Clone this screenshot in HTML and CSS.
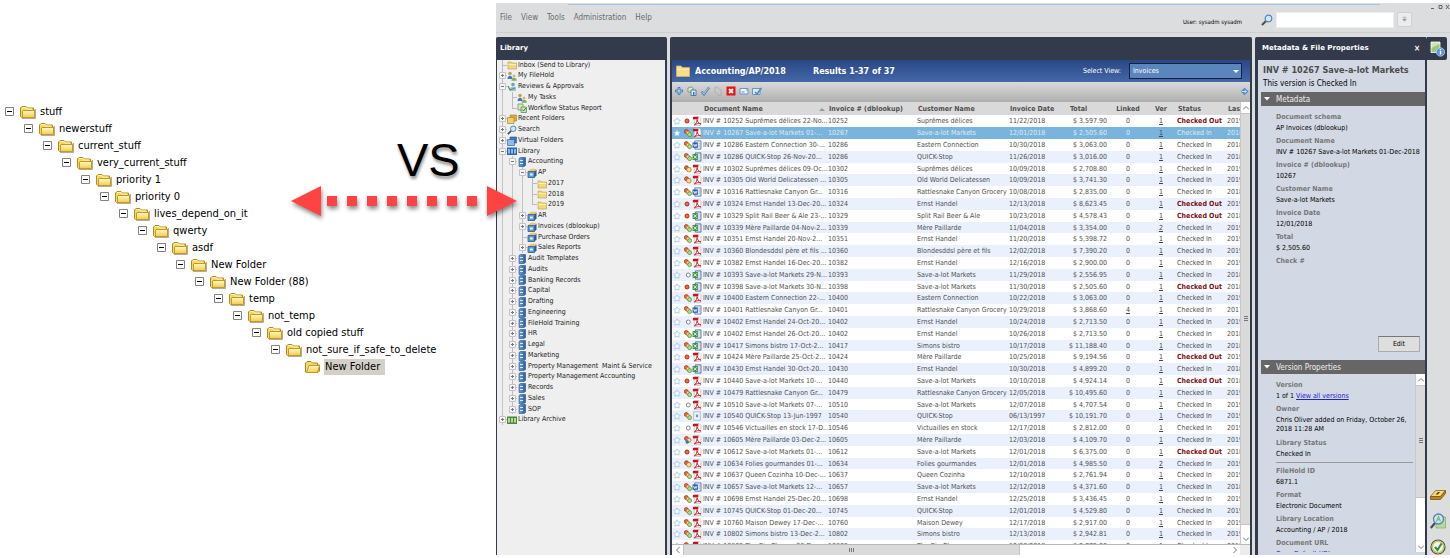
FILE: index.html
```html
<!DOCTYPE html>
<html lang="en">
<head>
<meta charset="utf-8">
<title>Folders vs Document Library</title>
<link rel="stylesheet" href="styles.css">
</head>
<body>

<svg class="defs" aria-hidden="true">
	<defs>
		<linearGradient id="gold" x1="0" y1="0" x2="0" y2="1">
			<stop offset="0" stop-color="#fffbc0"/>
			<stop offset="1" stop-color="#f3cb4e"/>
		</linearGradient>
		<linearGradient id="bluebox" x1="0" y1="0" x2="1" y2="0">
			<stop offset="0" stop-color="#6fa3dc"/>
			<stop offset="1" stop-color="#2c5b9c"/>
		</linearGradient>
	</defs>
	<!-- explorer tree -->
	<symbol id="xp-folder" viewBox="0 0 16 14">
		<path d="M2 13.5H15.5V4" fill="none" stroke="#8f8a78" opacity=".7"/>
		<path d="M.5 11.5V3L2 1.5H6L7.5 3H13.5V5H14.5V12.5H1.5Z" fill="#f5d868" stroke="#b58a1c"/>
		<path d="M3 5.5H14.5V12.5H2.5V6Z" fill="url(#gold)" stroke="#c4992a"/>
		<path d="M2 2.5H6L7 4H12" fill="none" stroke="#fff6b4"/>
	</symbol>
	<symbol id="xp-open" viewBox="0 0 16 14">
		<path d="M.5 12V3L2 1.5H6L7.5 3H12.5V5H14.5V11L13 12.5H1.5Z" fill="#f5d868" stroke="#b58a1c"/>
		<path d="M4 5.5H14.5L12.5 12.5H1.5Z" fill="url(#gold)" stroke="#c4992a"/>
	</symbol>
	<!-- library tree -->
	<symbol id="folder" viewBox="0 0 10 10">
		<path d="M1 2H4L5 3H9.500V9H1Z" fill="#f3d77c" stroke="#b99a45" stroke-width=".6"/>
		<path d="M1.500 4H9V5H1.500Z" fill="#fff0b4"/>
	</symbol>
	<symbol id="people" viewBox="0 0 10 10">
		<circle cx="3" cy="2.500" r="1.800" fill="#c99b58"/>
		<path d="M.5 8C.5 3.500 5.500 3.500 5.500 8Z" fill="#3e78c0"/>
		<circle cx="7" cy="5" r="1.500" fill="#d8b478"/>
		<path d="M4.500 9.800C4.500 5.800 9.800 5.800 9.800 9.800Z" fill="#7eb34c"/>
	</symbol>
	<symbol id="review" viewBox="0 0 10 10">
		<circle cx="6" cy="2.500" r="1.800" fill="#70a0cf"/>
		<path d="M3 9C2 5 6 3.500 9 5V9Z" fill="#9bc2e2"/>
		<path d="M1 4L3 8L8 6" fill="none" stroke="#5b9a45" stroke-width="1.300"/>
	</symbol>
	<symbol id="report" viewBox="0 0 10 10">
		<path d="M1 1H6V7H1Z" fill="#dfeacd" stroke="#6a9b54" stroke-width=".8"/>
		<path d="M4 4H9.500V9.500H4Z" fill="#cde4c2" stroke="#58905a" stroke-width=".8"/>
		<path d="M5 6.500L6.500 8L9 5" fill="none" stroke="#307a3a"/>
	</symbol>
	<symbol id="stack" viewBox="0 0 10 10">
		<path d="M3 1H9.500V7H3Z" fill="#d9ac45" stroke="#a37b27" stroke-width=".6"/>
		<path d="M.5 3.500H7V9.500H.5Z" fill="#f0ce72" stroke="#a37b27" stroke-width=".6"/>
	</symbol>
	<symbol id="bluestack" viewBox="0 0 10 10">
		<path d="M3 1H9.500V7H3Z" fill="#3e76bb" stroke="#28588f" stroke-width=".6"/>
		<path d="M.5 3.500H7.500V9.500H.5Z" fill="#8fbce6" stroke="#28588f" stroke-width=".6"/>
	</symbol>
	<symbol id="lens" viewBox="0 0 12 12">
		<path d="M1 11L5 7" stroke="#4b4b58" stroke-width="2"/>
		<circle cx="7.500" cy="4.500" r="3.300" fill="#cfe6fa" stroke="#4f87c0" stroke-width="1.200"/>
	</symbol>
	<symbol id="books" viewBox="0 0 10 10">
		<path d="M0 1.500H10V9H0Z" fill="#2f66ad"/>
		<path d="M1 3H3V7.500H1ZM4 3H6V7.500H4ZM7 3H9V7.500H7Z" fill="#8eb7e6"/>
	</symbol>
	<symbol id="archive" viewBox="0 0 10 10">
		<path d="M0 1.500H10V9H0Z" fill="#4f8638"/>
		<path d="M1 3H3V7.500H1ZM4 3H6V7.500H4ZM7 3H9V7.500H7Z" fill="#b7d7a0"/>
	</symbol>
	<symbol id="cabinet" viewBox="0 0 10 10">
		<path d="M2 1.500L3.500 .5H8.500V8.500L7 9.500H2Z" fill="url(#bluebox)" stroke="#25508c" stroke-width=".6"/>
		<path d="M3 3H6V4H3ZM3 6H6V7H3Z" fill="#d8e8f8"/>
	</symbol>
	<symbol id="drawer" viewBox="0 0 10 10">
		<path d="M1 3L4 .8H9.500L8 3Z" fill="#efc75a"/>
		<path d="M1 3.500H7.500V9.500H1Z" fill="#5e99d4" stroke="#285a96" stroke-width=".8"/>
		<path d="M7.500 3.500L9.500 1.500V7.500L7.500 9.500Z" fill="#2a5c9c"/>
		<path d="M3 5.500H5.800V7.500H3Z" fill="#e7f2fc"/>
	</symbol>
	<!-- grid rows -->
	<symbol id="star" viewBox="0 0 8 8">
		<path d="M4 .8L5 2.800L7.300 3.200L5.800 4.800L6.100 7.200L4 6.200L1.900 7.200L2.200 4.800L.7 3.200L3 2.800Z" fill="#fff" stroke="#8fbce0" stroke-width=".7"/>
	</symbol>
	<symbol id="st-r" viewBox="0 0 8 8">
		<circle cx="3" cy="4" r="2" fill="#f0703a" stroke="#b5281c"/>
	</symbol>
	<symbol id="st-m" viewBox="0 0 8 8">
		<circle cx="2.300" cy="2.500" r="2" fill="#ea6a3c" stroke="#a02a1c" stroke-width=".7"/>
		<circle cx="4" cy="4" r="1.900" fill="#f8dc7c" stroke="#a5622a" stroke-width=".6"/>
		<circle cx="5.600" cy="5.600" r="2" fill="#b4dc8c" stroke="#4b8430" stroke-width=".7"/>
	</symbol>
	<symbol id="st-y" viewBox="0 0 8 8">
		<circle cx="2.500" cy="2.800" r="2" fill="#ea6a3c" stroke="#a02a1c" stroke-width=".8"/>
		<circle cx="4.900" cy="4.700" r="2.300" fill="#fbe48c" stroke="#a2742a" stroke-width=".8"/>
	</symbol>
	<symbol id="st-b" viewBox="0 0 8 8">
		<circle cx="2.500" cy="2.600" r="2" fill="#ea6a3c" stroke="#a02a1c" stroke-width=".8"/>
		<circle cx="5" cy="4.200" r="2.100" fill="#fbe48c" stroke="#a2742a" stroke-width=".8"/>
		<circle cx="3.200" cy="6" r="1.700" fill="#3f6fb0"/>
	</symbol>
	<symbol id="st-o" viewBox="0 0 8 8">
		<circle cx="4.300" cy="4" r="2" fill="#fff" stroke="#777" stroke-width=".9"/>
	</symbol>
	<symbol id="ft-p" viewBox="0 0 8 9">
		<path d="M1.500 .5H6L7.500 2V8.500H1.500Z" fill="#fff" stroke="#bbb" stroke-width=".6"/>
		<path d="M.3 .8H5.200V3H.3Z" fill="#c8141c"/>
		<path d="M1.600 8C3.500 6.500 4.200 4.800 4 3.200C4.400 5.200 5.600 6.600 7.600 7.200C5.600 6.600 3.600 6.800 1.600 8Z" fill="none" stroke="#cf2229" stroke-width=".9"/>
	</symbol>
	<symbol id="ft-w" viewBox="0 0 8 9">
		<path d="M2 .8H7.600V8.200H2Z" fill="#e9f1fb" stroke="#3d69ab" stroke-width=".7"/>
		<path d="M5.500 3H7M5.500 4.500H7M5.500 6H7" stroke="#7d9cc8" stroke-width=".6"/>
		<path d="M0 2.200H4.800V7H0Z" fill="#2b58a2"/>
		<path d="M.8 3.400L1.700 5.900L2.400 4L3.100 5.900L4 3.400" fill="none" stroke="#fff" stroke-width=".7"/>
	</symbol>
	<symbol id="ft-x" viewBox="0 0 8 9">
		<path d="M2.500 .8H7.600V8.200H2.500Z" fill="#d3e2f2" stroke="#3e5f8c" stroke-width=".7"/>
		<path d="M0 1.800H4.800V7.200H0Z" fill="#3f9345"/>
		<path d="M1 3L3.800 6M3.800 3L1 6" stroke="#fff" stroke-width=".8"/>
	</symbol>
	<symbol id="ft-t" viewBox="0 0 8 9">
		<path d="M1 .7H7V8.300H1Z" fill="#eef4fa" stroke="#9ab0c6" stroke-width=".7"/>
		<path d="M3 3.200H5V5.600H3Z" fill="#6d93b8"/>
	</symbol>
</svg>

<main class="page">

	<section class="explorer">
		<ul class="xp-tree" id="xpTree"></ul>
	</section>

	<div class="versus">
		<span class="versus-text">VS</span>
		<svg class="versus-arrow" viewBox="0 0 226 30">
			<path d="M0 15L30 0V30ZM226 15L196 0V30Z"/>
			<path d="M36 10h10v10h-10zM56 10h10v10h-10zM76 10h10v10h-10zM96 10h10v10h-10zM116 10h10v10h-10zM136 10h10v10h-10zM156 10h10v10h-10zM176 10h10v10h-10z"/>
		</svg>
	</div>

	<section class="app">
		<header class="topbar">
			<nav class="menu">
				<a href="#">File</a>
				<a href="#">View</a>
				<a href="#">Tools</a>
				<a href="#">Administration</a>
				<a href="#">Help</a>
			</nav>
			<span class="user">User: sysadm sysadm</span>
			<form class="search">
				<label for="q" title="Search"><svg class="ico-12"><use href="#lens"/></svg></label>
				<input type="text" id="q">
				<button type="button" class="search-more" aria-label="Search options">
					<svg viewBox="0 0 8 8"><path d="M2 1.500H6M2 3.500H6L4 6Z" stroke="#999" stroke-width=".8" fill="#999"/></svg>
				</button>
			</form>
			<svg class="window-buttons" viewBox="0 0 20 6"><path d="M1 4.500H4M9 1.500H12V4.500H9ZM16 1L19 5M19 1L16 5" fill="none" stroke="#666"/></svg>
		</header>

		<div class="panels">
			<aside class="panel library">
				<h2 class="panel-head">Library</h2>
				<ul class="lib-tree" id="libTree"></ul>
			</aside>

			<section class="panel results">
				<div class="panel-head"></div>
				<div class="title-bar">
					<svg class="ico-title" viewBox="0 0 14 12"><path d="M.5 1H5L6.500 2.500H13.500V11.500H.5Z" fill="#f8dd8a" stroke="#e0b850" stroke-width=".7"/><path d="M1 4H13V5H1Z" fill="#fff1bd"/></svg>
					<h1>Accounting/AP/2018</h1>
					<strong>Results 1-37 of 37</strong>
					<label for="view">Select View:</label>
					<span class="select-wrap">
						<select id="view"><option>Invoices</option></select>
						<svg viewBox="0 0 8 5"><path d="M1 1H7L4 4Z" fill="#fff"/></svg>
					</span>
				</div>
				<div class="toolbar">
					<button type="button" aria-label="Add"><svg viewBox="0 0 10 10"><path d="M4 1.500H6V4H8.500V6H6V8.500H4V6H1.500V4H4Z" fill="#a9c9ea" stroke="#4b7fb8"/></svg></button>
					<button type="button" aria-label="Copy"><svg viewBox="0 0 10 10"><path d="M1 2L4 .8L6 2V6H1Z" fill="#d9e8d4" stroke="#6a8f6a" stroke-width=".8"/><path d="M4 4H9V9.500H4Z" fill="#dcebfa" stroke="#4474a8" stroke-width=".9"/><path d="M6 9.500V6H7.500V9.500" fill="#4474a8"/></svg></button>
					<button type="button" aria-label="Check out"><svg viewBox="0 0 10 10"><path d="M1.500 5.500L4 8.500L9 1.500" fill="none" stroke="#5585ba" stroke-width="2.200"/><path d="M2 5.800L4 8L8.600 1.800" fill="none" stroke="#c6ddf4" stroke-width=".8"/></svg></button>
					<button type="button" aria-label="Link" disabled><svg viewBox="0 0 10 10"><path d="M2 1V6L6 9.500H8V4L4 1Z" fill="#c9c9c9" stroke="#999" stroke-width=".8"/></svg></button>
					<button type="button" aria-label="Delete"><svg viewBox="0 0 10 10"><path d="M.5 .5H9.500V9.500H.5Z" fill="#ee1010"/><path d="M3 3L7 7M7 3L3 7" stroke="#fff" stroke-width="1.800"/></svg></button>
					<button type="button" aria-label="Email"><svg viewBox="0 0 10 10"><path d="M1 2.500H9V8H1Z" fill="#eef5fc" stroke="#5d8dc2" stroke-width=".9"/><path d="M2.500 6H5.500M7 4H8.500" stroke="#5d8dc2"/></svg></button>
					<button type="button" aria-label="Send"><svg viewBox="0 0 10 10"><path d="M.5 2.500H8V8.500H.5Z" fill="#dbe9f7" stroke="#5d8dc2" stroke-width=".9"/><path d="M3 6L5 8L9.500 2" fill="none" stroke="#5585ba" stroke-width="1.500"/></svg></button>
					<button type="button" class="expand" aria-label="Expand"><svg viewBox="0 0 10 10"><path d="M1 5L4 2L5 .8L9.500 5L5 9.200L4 8Z" fill="#4a86cc"/><path d="M2 5H7M5 3L7 5L5 7" fill="none" stroke="#d6e8fa"/></svg></button>
				</div>
				<div class="grid-area">
					<div class="grid-scroll">
						<table class="grid">
							<colgroup>
								<col class="c-star"><col class="c-state"><col class="c-type"><col class="c-name"><col class="c-num"><col class="c-cust"><col class="c-date"><col class="c-total"><col class="c-linked"><col class="c-ver"><col class="c-status"><col>
							</colgroup>
							<thead>
								<tr>
									<th></th><th></th><th></th>
									<th class="name">Document Name <svg class="sort" viewBox="0 0 6 4"><path d="M0 4L3 1L6 4Z" fill="#999"/></svg></th>
									<th>Invoice # (dblookup)</th>
									<th>Customer Name</th>
									<th>Invoice Date</th>
									<th class="total">Total</th>
									<th class="linked">Linked</th>
									<th class="ver">Ver</th>
									<th class="status">Status</th>
									<th>Last</th>
								</tr>
							</thead>
							<tbody id="gridBody"></tbody>
						</table>
					</div>
					<div class="vbar">
						<span class="bar-btn"><svg viewBox="0 0 6 6"><path d="M0 4.500L3 1.500L6 4.500"/></svg></span>
						<span class="bar-thumb"><svg viewBox="0 0 6 6"><path d="M1 .5H5M1 2.500H5M1 4.500H5"/></svg></span>
						<span class="bar-rest"></span>
						<span class="bar-btn"><svg viewBox="0 0 6 6"><path d="M0 1.500L3 4.500L6 1.500"/></svg></span>
					</div>
				</div>
				<div class="hbar">
					<span class="bar-btn"><svg viewBox="0 0 6 6"><path d="M4.500 0L1.500 3L4.500 6"/></svg></span>
					<span class="bar-thumb"><svg viewBox="0 0 6 6"><path d="M.5 1V5M2.500 1V5M4.500 1V5"/></svg></span>
					<span class="bar-rest"></span>
					<span class="bar-btn"><svg viewBox="0 0 6 6"><path d="M1.500 0L4.500 3L1.500 6"/></svg></span>
					<span class="bar-corner"></span>
				</div>
			</section>

			<aside class="panel meta">
				<div class="panel-head">
					<h2>Metadata &amp; File Properties</h2>
					<button type="button" class="close" aria-label="Close">×</button>
				</div>
				<div class="meta-body">
					<h3>INV # 10267 Save-a-lot Markets</h3>
					<p class="state">This version is Checked In</p>
					<h4 class="section"><svg viewBox="0 0 6 4"><path d="M0 0H6L3 3.500Z" fill="#fff"/></svg>Metadata</h4>
					<div class="meta-top">
						<dl class="props">
							<dt>Document schema</dt><dd>AP Invoices (dblookup)</dd>
							<dt>Document Name</dt><dd>INV # 10267 Save-a-lot Markets 01-Dec-2018</dd>
							<dt>Invoice # (dblookup)</dt><dd>10267</dd>
							<dt>Customer Name</dt><dd>Save-a-lot Markets</dd>
							<dt>Invoice Date</dt><dd>12/01/2018</dd>
							<dt>Total</dt><dd>$ 2,505.60</dd>
							<dt>Check #</dt>
						</dl>
						<button type="button" class="edit">Edit</button>
					</div>
					<h4 class="section"><svg viewBox="0 0 6 4"><path d="M0 0H6L3 3.500Z" fill="#fff"/></svg>Version Properties</h4>
					<div class="meta-bottom">
						<div class="versions">
							<dl class="props">
								<dt>Version</dt><dd>1 of 1 <a href="#">View all versions</a></dd>
								<dt>Owner</dt><dd class="owner">Chris Oliver added on Friday, October 26, 2018 11:28 AM</dd>
								<dt>Library Status</dt><dd>Checked In</dd>
							</dl>
							<hr>
							<dl class="props">
								<dt>FileHold ID</dt><dd>6871.1</dd>
								<dt>Format</dt><dd>Electronic Document</dd>
								<dt>Library Location</dt><dd>Accounting / AP / 2018</dd>
								<dt>Document URL</dt><dd><a href="#">Copy Default URL</a></dd>
							</dl>
						</div>
						<div class="vbar">
							<span class="bar-btn"><svg viewBox="0 0 6 6"><path d="M0 4.500L3 1.500L6 4.500"/></svg></span>
							<span class="bar-thumb"><svg viewBox="0 0 6 6"><path d="M1 .5H5M1 2.500H5M1 4.500H5"/></svg></span>
							<span class="bar-rest"></span>
							<span class="bar-btn"><svg viewBox="0 0 6 6"><path d="M0 1.500L3 4.500L6 1.500"/></svg></span>
						</div>
					</div>
				</div>
			</aside>

			<div class="rail">
				<button type="button" class="rail-tab" aria-label="Properties"><svg viewBox="0 0 16 16"><path d="M2 1H11V11.500H2Z" fill="#cfe6b4" stroke="#fff" stroke-width=".8"/><path d="M2.500 7L10.500 3V11H2.500Z" fill="#9cc774"/><circle cx="11.500" cy="11" r="4.200" fill="#5b94d8" stroke="#c3daf2" stroke-width=".7"/><path d="M11.500 10V13.500M11.500 8V9.200" stroke="#fff" stroke-width="1.400"/></svg></button>
				<div class="rail-tools">
					<button type="button" aria-label="Shortcut"><svg viewBox="0 0 16 16"><path d="M.5 9.500L5.500 3.500H15.500L10.500 9.500Z" fill="#f6d878" stroke="#8a6318" stroke-width=".8"/><path d="M.5 9.500H10.500L15.500 3.500V6.500L10.500 12.500H.5Z" fill="#b98620" stroke="#7a5510" stroke-width=".8"/><path d="M5.500 7.500L8 5H10L8 7.500Z" fill="#5a3d08"/></svg></button>
					<button type="button" aria-label="View"><svg viewBox="0 0 16 16"><path d="M6 4H15.500V15H6Z" fill="#b9d8a0" stroke="#83ac68" stroke-width=".7"/><path d="M.8 15L5 10" stroke="#4b4b50" stroke-width="2.200"/><circle cx="8.500" cy="6" r="5" fill="#cfe5f4" stroke="#5484b0" stroke-width="1.300"/><path d="M6.500 8.500L8.500 3.500L10.500 8.500M7.200 6.800H9.800" fill="none" stroke="#7cb07c" stroke-width="1.100"/></svg></button>
					<button type="button" aria-label="Approve"><svg viewBox="0 0 16 16"><circle cx="8" cy="8" r="7" fill="#dfe9c8" stroke="#3b5c45" stroke-width="1.200"/><circle cx="8" cy="8" r="5.600" fill="#eef4fb" stroke="#d9c04c" stroke-width="1.400"/><path d="M5 8L7.500 11L11.500 4.500" fill="none" stroke="#2f8a44" stroke-width="2"/></svg></button>
				</div>
			</div>
		</div>
	</section>

</main>

<script src="app.js"></script>
</body>
</html>
```
FILE: styles.css
```css
* {
	box-sizing: border-box;
}

body {
	margin: 0;
	background: #fff;
	font-family: "DejaVu Sans Condensed", "DejaVu Sans", sans-serif;
	font-size: 7px;
	line-height: 11px;
	color: #222;
}

ul, dl, dd, h1, h2, h3, h4, p {
	margin: 0;
	padding: 0;
	list-style: none;
	font-weight: normal;
}

button, input, select {
	font: inherit;
	margin: 0;
	padding: 0;
	border: 0;
	background: none;
}

svg {
	display: block;
	flex: none;
}

.defs {
	position: absolute;
	width: 0;
	height: 0;
}

.page {
	position: relative;
	display: flex;
	height: 100vh;
	padding: 3px 0;
	overflow: hidden;
}

/* folder tree on the left */
.explorer {
	flex: 0 0 496px;
	padding-top: 100px;
}

.xp-tree li {
	display: flex;
	align-items: center;
	height: 17px;
	padding-left: calc(5px + var(--level) * 19px);
	font-size: 11px;
	line-height: 16px;
	color: #000;
}

.xp-toggle {
	width: 9px;
	height: 9px;
	margin-right: 6px;
}

.xp-folder {
	width: 16px;
	height: 14px;
	margin-right: 3px;
}

.xp-label {
	padding: 0 5px 0 1px;
	white-space: nowrap;
}

.xp-label.selected {
	background: #d4d0c8;
}

/* arrow between both halves */
.versus {
	position: absolute;
	z-index: 2;
	left: 291px;
	top: 134px;
	width: 226px;
}

.versus-text {
	display: block;
	padding-left: 106px;
	font-family: "Liberation Sans", Arial, sans-serif;
	font-size: 47px;
	line-height: 52px;
	color: #000;
	text-shadow: 1px 3px 3px rgba(0, 0, 0, .4);
}

.versus-arrow {
	width: 226px;
	height: 30px;
	overflow: visible;
	fill: #ff4343;
	filter: drop-shadow(1px 3px 2px rgba(0, 0, 0, .45));
}

/* application */
.app {
	display: flex;
	flex: 1;
	flex-direction: column;
	min-width: 0;
	background: #dcdddf;
}

.topbar {
	position: relative;
	display: flex;
	align-items: center;
	height: 30px;
	margin-bottom: 4px;
	padding-right: 38px;
	border-bottom: 1px solid #cfcfd1;
}

.topbar::before {
	content: "";
	position: absolute;
	top: 1px;
	left: 72px;
	right: 70px;
	height: 1px;
	background: #a9c4e4;
}

.menu {
	display: flex;
	flex: 1;
	gap: 9px;
	padding-left: 4px;
	font-size: 8px;
}

.menu a {
	color: #6b6b6b;
	text-decoration: none;
}

.user {
	margin-right: 19px;
	padding-top: 7px;
	font-size: 6px;
	color: #000;
}

.search {
	display: flex;
	align-items: center;
	padding-top: 4px;
}

.ico-12 {
	width: 12px;
	height: 12px;
	margin-right: 3px;
}

.search input {
	width: 118px;
	height: 16px;
	margin-right: 3px;
	background: #fff;
	border: 1px solid #eee;
}

.search-more {
	width: 15px;
	height: 15px;
	padding: 3px;
	border: 1px solid #d0d0d0;
	border-radius: 2px;
	background: #ececec;
}

.window-buttons {
	position: absolute;
	top: 1px;
	right: 0;
	width: 20px;
	height: 6px;
}

.panels {
	display: flex;
	flex: 1;
	min-height: 0;
}

.panel {
	display: flex;
	flex-direction: column;
	background: #333a4c;
	border: solid #333a4c;
	border-width: 0 2px;
	border-radius: 2px 2px 0 0;
}

.panel-head {
	flex: none;
	height: 23px;
	font-weight: bold;
	line-height: 23px;
	color: #fff;
}

h2 {
	font-family: "DejaVu Sans", sans-serif;
	font-size: 7px;
	font-weight: bold;
}

.library {
	flex: none;
	width: 171px;
	margin-right: 3px;
	border-left-width: 1px;
}

.library .panel-head {
	padding-left: 3px;
}

/* library tree */
.lib-tree {
	flex: 1;
	background: #efefef;
}

.lib-tree li {
	display: flex;
	align-items: center;
	height: 11px;
	white-space: pre;
}

.lib-tree li:nth-child(4n + 1) {
	height: 10px;
}

.guide {
	flex: none;
	align-self: stretch;
	width: 10px;
	background: linear-gradient(#c4c4c4, #c4c4c4) 5px 0 / 1px 100% no-repeat;
}

.guide.branch {
	background: linear-gradient(#bbb, #bbb) 5px 0 / 1px 100% no-repeat, linear-gradient(#bbb, #bbb) 5px 5px / 5px 1px no-repeat;
}

.guide.last {
	background: linear-gradient(#bbb, #bbb) 5px 0 / 1px 6px no-repeat, linear-gradient(#bbb, #bbb) 5px 5px / 5px 1px no-repeat;
}

.guide svg {
	width: 7px;
	height: 7px;
	margin: 2px;
}

.lib-icon {
	width: 10px;
	height: 10px;
	margin-right: 1px;
}

/* results */
.results {
	flex: 1;
	min-width: 0;
	margin-right: 3px;
}

.title-bar {
	display: flex;
	align-items: center;
	flex: none;
	height: 22px;
	padding: 0 8px 0 4px;
	background: linear-gradient(#2a4785, #4468a8);
	color: #fff;
}

.ico-title {
	width: 14px;
	height: 12px;
	margin-right: 5px;
}

.title-bar h1,
.title-bar strong {
	font-family: "DejaVu Sans", sans-serif;
	font-size: 8px;
	font-weight: bold;
}

.title-bar h1 {
	width: 118px;
}

.title-bar strong {
	flex: 1;
}

.title-bar label {
	margin-right: 8px;
}

.select-wrap {
	position: relative;
}

.select-wrap select {
	display: block;
	width: 113px;
	height: 16px;
	padding-left: 3px;
	appearance: none;
	background: #5b85bd;
	border: 1px solid #16223f;
	color: #fff;
}

.select-wrap svg {
	position: absolute;
	right: 2px;
	top: 6px;
	width: 8px;
	height: 5px;
}

.toolbar {
	display: flex;
	align-items: center;
	flex: none;
	gap: 3px;
	height: 20px;
	padding: 0 1px 0 2px;
	background: linear-gradient(#dadada, #b4b4b4);
	border-bottom: 2px solid #b0b0b0;
}

.toolbar button {
	width: 10px;
	height: 10px;
}

.toolbar button:disabled {
	opacity: .6;
}

.toolbar .expand {
	width: 9px;
	margin-left: auto;
}

.grid-area {
	display: flex;
	flex: 1;
	min-height: 0;
	background: #fff;
}

.grid-scroll {
	flex: 1;
	min-width: 0;
	overflow: hidden;
}

.grid {
	width: 100%;
	border-collapse: collapse;
	table-layout: fixed;
	color: #505050;
}

.c-star, .c-state { width: 10px; }
.c-type { width: 11px; }
.c-name { width: 125px; }
.c-num { width: 89px; }
.c-cust { width: 92px; }
.c-date { width: 57px; }
.c-total { width: 41px; }
.c-linked { width: 42px; }
.c-ver { width: 24px; }
.c-status { width: 54px; }

.grid th,
.grid td {
	height: inherit;
	padding: 0;
	overflow: hidden;
	white-space: nowrap;
	text-align: left;
	vertical-align: middle;
	line-height: 10px;
}

.grid thead tr {
	height: 13px;
	background: #d9d9d9;
}

.grid th {
	padding-left: 1px;
}

.grid th.name {
	position: relative;
}

.sort {
	position: absolute;
	right: 3px;
	top: 5px;
	width: 6px;
	height: 4px;
}

.grid tbody tr {
	height: 12px;
}

.grid tbody tr:nth-child(5n) {
	height: 11px;
}

.grid tbody tr:nth-child(even) {
	background: #eaf1fd;
}

.grid tbody tr.selected {
	background: #78b4dc;
	color: #dcecf7;
}

.grid td.total {
	text-align: right;
}

.grid th.total {
	padding-left: 4px;
}

.grid .linked,
.grid .ver {
	padding: 0;
	text-align: center;
}

.grid .ver a,
.grid .linked a {
	color: #444;
}

.grid .status {
	padding-left: 4px;
}

.grid th.status {
	padding-left: 5px;
}

.grid .out {
	font-weight: bold;
	color: #7c1018;
}

.grid td svg {
	width: 8px;
	height: 8px;
	margin-left: 1px;
}

.grid td svg.state {
	width: 10px;
	height: 10px;
	margin-left: 0;
}

.grid td svg.type {
	width: 10px;
	height: 10px;
	margin-left: 0;
}

/* drawn scroll bars */
.vbar,
.hbar {
	display: flex;
	flex: none;
	background: #fff;
}

.vbar {
	flex-direction: column;
	width: 10px;
	border-left: 1px solid #c8c8c8;
}

.hbar {
	height: 11px;
	border-top: 1px solid #b8b8b8;
}

.vbar span,
.hbar span {
	display: flex;
	align-items: center;
	justify-content: center;
}

.vbar svg,
.hbar svg {
	width: 6px;
	height: 6px;
	fill: none;
	stroke: #777;
}

.bar-btn {
	flex: 0 0 11px;
	background: #fff;
}

.bar-thumb {
	background: #dadada;
	border: solid #c4c4c4;
	border-width: 1px 0;
}

.grid-area .bar-thumb {
	flex: 51;
}

.grid-area .bar-rest {
	flex: 1;
}

.hbar .bar-thumb {
	flex: 61;
	border-width: 0 1px;
}

.hbar .bar-rest {
	flex: 38;
}

.bar-corner {
	flex: 0 0 10px;
	background: #ececec;
}

/* metadata */
.meta {
	flex: none;
	width: 172px;
	border-left-width: 3px;
}

.meta .panel-head {
	display: flex;
	justify-content: space-between;
	padding: 0 5px 0 4px;
}

.close {
	font-size: 8px;
	font-weight: bold;
	line-height: 19px;
	color: #fff;
}

.meta-body {
	display: flex;
	flex: 1;
	flex-direction: column;
	min-height: 0;
	padding: 4px 0 3px 3px;
	background: #d2d9e4;
}

.meta-body h3 {
	padding-left: 2px;
	font-size: 9px;
	font-weight: bold;
	line-height: 12px;
	color: #4c4c4c;
	white-space: nowrap;
}

.state {
	padding-left: 2px;
	font-size: 8px;
	line-height: 16px;
	color: #000;
}

.section {
	display: flex;
	align-items: center;
	flex: none;
	height: 14px;
	font-size: 8px;
	background: #666;
	color: #eee;
}

.section svg {
	width: 6px;
	height: 4px;
	margin: 0 6px 0 3px;
}

.meta-top {
	display: flex;
	flex: 0 0 254px;
	flex-direction: column;
	justify-content: space-between;
	padding: 6px 0 8px 15px;
}

.props {
	color: #000;
}

.props dt {
	font-weight: bold;
	color: #777;
}

.props dd {
	margin-bottom: 2px;
	white-space: nowrap;
}

.props dd.owner {
	line-height: 9px;
	margin-bottom: 4px;
	padding-top: 1px;
	white-space: normal;
}

.props a {
	color: #2222cc;
}

.edit {
	align-self: flex-end;
	width: 42px;
	height: 16px;
	margin-right: 5px;
	background: #dedede;
	border: 1px solid #aaa;
	border-top-color: #777;
	color: #000;
}

.meta-bottom {
	display: flex;
	flex: 1;
	min-height: 0;
}

.versions {
	flex: 1;
	overflow: hidden;
	padding: 6px 2px 0 15px;
}

.versions hr {
	height: 1px;
	margin: 1px 0 3px;
	border: 0;
	background: #999;
}

.meta-bottom .bar-thumb {
	flex: 112;
}

.meta-bottom .bar-rest {
	flex: 44;
}

/* icon rail on the far right */
.rail {
	display: flex;
	flex: none;
	flex-direction: column;
	justify-content: space-between;
	align-items: flex-start;
	width: 23px;
}

.rail-tab {
	width: 20px;
	height: 23px;
	padding: 3px 2px;
	background: #333a4c;
	border-radius: 0 2px 2px 0;
}

.rail-tools {
	display: flex;
	flex-direction: column;
	gap: 10px;
	padding-left: 3px;
}

.rail svg {
	width: 16px;
	height: 16px;
}
```
FILE: app.js
```js
// nested folders, each one a level deeper
var folders = [
	"stuff", "newerstuff", "current_stuff", "very_current_stuff", "priority 1", "priority 0",
	"lives_depend_on_it", "qwerty", "asdf", "New Folder", "New Folder (88)", "temp",
	"not_temp", "old copied stuff", "not_sure_if_safe_to_delete", "New Folder"
];

// level, toggle, icon, label
var library = [
	[0, "", "folder", "Inbox (Send to Library)"],
	[0, "+", "people", "My FileHold"],
	[0, "-", "review", "Reviews & Approvals"],
	[1, "", "people", "My Tasks"],
	[1, "last", "report", "Workflow Status Report"],
	[0, "+", "stack", "Recent Folders"],
	[0, "+", "lens", "Search"],
	[0, "+", "bluestack", "Virtual Folders"],
	[0, "-", "books", "Library"],
	[1, "-", "cabinet", "Accounting"],
	[2, "-", "drawer", "AP"],
	[3, "", "folder", "2017"],
	[3, "", "folder", "2018"],
	[3, "last", "folder", "2019"],
	[2, "+", "drawer", "AR"],
	[2, "+", "drawer", "Invoices (dblookup)"],
	[2, "", "drawer", "Purchase Orders"],
	[2, "+", "drawer", "Sales Reports"],
	[1, "+", "cabinet", "Audit Templates"],
	[1, "+", "cabinet", "Audits"],
	[1, "+", "cabinet", "Banking Records"],
	[1, "+", "cabinet", "Capital"],
	[1, "+", "cabinet", "Drafting"],
	[1, "+", "cabinet", "Engineering"],
	[1, "+", "cabinet", "FileHold Training"],
	[1, "+", "cabinet", "HR"],
	[1, "+", "cabinet", "Legal"],
	[1, "+", "cabinet", "Marketing"],
	[1, "+", "cabinet", "Property Management  Maint & Service"],
	[1, "+", "cabinet", "Property Management Accounting"],
	[1, "+", "cabinet", "Records"],
	[1, "+", "cabinet", "Sales"],
	[1, "+", "cabinet", "SOP"],
	[0, "+", "archive", "Library Archive"]
];

// state + file type, number, name, customer, date, total, ver, last
var invoices = [
	["rp", "10252", "Suprêmes délices 22-No...", "Suprêmes délices", "11/22/2018", "3,597.90", 1, 2019],
	["mp", "10267", "Save-a-lot Markets 01-...", "Save-a-lot Markets", "12/01/2018", "2,505.60", 1, 2018],
	["mw", "10286", "Eastern Connection 30-...", "Eastern Connection", "10/30/2018", "3,063.00", 1, 2018],
	["mx", "10286", "QUICK-Stop 26-Nov-20...", "QUICK-Stop", "11/26/2018", "3,016.00", 1, 2018],
	["yp", "10302", "Suprêmes délices 09-Oc...", "Suprêmes délices", "10/09/2018", "2,708.80", 1, 2019],
	["yp", "10305", "Old World Delicatessen ...", "Old World Delicatessen", "10/09/2018", "3,741.30", 1, 2019],
	["mw", "10316", "Rattlesnake Canyon Gr...", "Rattlesnake Canyon Grocery", "10/08/2018", "2,835.00", 1, 2018],
	["rp", "10324", "Ernst Handel 13-Dec-20...", "Ernst Handel", "12/13/2018", "8,623.45", 1, 2019],
	["rx", "10329", "Split Rail Beer & Ale 23-...", "Split Rail Beer & Ale", "10/23/2018", "4,578.43", 1, 2018],
	["mx", "10339", "Mère Paillarde 04-Nov-2...", "Mère Paillarde", "11/04/2018", "3,354.00", 2, 2019],
	["mp", "10351", "Ernst Handel 20-Nov-2...", "Ernst Handel", "11/20/2018", "5,398.72", 1, 2019],
	["mp", "10360", "Blondesddsl père et fils ...", "Blondesddsl père et fils", "12/02/2018", "7,390.20", 1, 2019],
	["mp", "10382", "Ernst Handel 16-Dec-20...", "Ernst Handel", "12/16/2018", "2,900.00", 1, 2019],
	["ox", "10393", "Save-a-lot Markets 29-N...", "Save-a-lot Markets", "11/29/2018", "2,556.95", 1, 2018],
	["rx", "10398", "Save-a-lot Markets 30-N...", "Save-a-lot Markets", "11/30/2018", "2,505.60", 1, 2018],
	["mp", "10400", "Eastern Connection 22-...", "Eastern Connection", "10/22/2018", "3,063.00", 1, 2019],
	["mw", "10401", "Rattlesnake Canyon Gr...", "Rattlesnake Canyon Grocery", "10/29/2018", "3,868.60", 1, 2017],
	["op", "10402", "Ernst Handel 24-Oct-20...", "Ernst Handel", "10/24/2018", "2,713.50", 1, 2019],
	["mx", "10402", "Ernst Handel 26-Oct-20...", "Ernst Handel", "10/26/2018", "2,713.50", 1, 2018],
	["mx", "10417", "Simons bistro 17-Oct-2...", "Simons bistro", "10/17/2018", "11,188.40", 1, 2018],
	["rp", "10424", "Mère Paillarde 25-Oct-2...", "Mère Paillarde", "10/25/2018", "9,194.56", 1, 2019],
	["mx", "10430", "Ernst Handel 30-Oct-20...", "Ernst Handel", "10/30/2018", "4,899.20", 1, 2018],
	["rp", "10440", "Save-a-lot Markets 10-...", "Save-a-lot Markets", "10/10/2018", "4,924.14", 1, 2018],
	["mp", "10479", "Rattlesnake Canyon Gr...", "Rattlesnake Canyon Grocery", "12/05/2018", "10,495.60", 1, 2019],
	["op", "10510", "Save-a-lot Markets 07-...", "Save-a-lot Markets", "12/07/2018", "4,707.54", 1, 2019],
	["mt", "10540", "QUICK-Stop 13-Jun-1997", "QUICK-Stop", "06/13/1997", "10,191.70", 1, 2019],
	["op", "10546", "Victuailles en stock 17-D...", "Victuailles en stock", "12/17/2018", "2,812.00", 1, 2019],
	["bp", "10605", "Mère Paillarde 03-Dec-2...", "Mère Paillarde", "12/03/2018", "4,109.70", 1, 2019],
	["rp", "10612", "Save-a-lot Markets 01-...", "Save-a-lot Markets", "12/01/2018", "6,375.00", 1, 2018],
	["yp", "10634", "Folies gourmandes 01-...", "Folies gourmandes", "12/01/2018", "4,985.50", 2, 2019],
	["mp", "10637", "Queen Cozinha 10-Dec-...", "Queen Cozinha", "12/10/2018", "2,761.94", 1, 2019],
	["mw", "10657", "Save-a-lot Markets 12-...", "Save-a-lot Markets", "12/12/2018", "4,371.60", 1, 2018],
	["mp", "10698", "Ernst Handel 25-Dec-20...", "Ernst Handel", "12/25/2018", "3,436.45", 1, 2019],
	["mp", "10745", "QUICK-Stop 01-Dec-20...", "QUICK-Stop", "12/01/2018", "4,529.80", 1, 2019],
	["mp", "10760", "Maison Dewey 17-Dec-...", "Maison Dewey", "12/17/2018", "2,917.00", 1, 2019],
	["mp", "10802", "Simons bistro 13-Dec-2...", "Simons bistro", "12/13/2018", "2,942.81", 1, 2019],
	["mp", "10805", "The Big Cheese 30-Dec-...", "The Big Cheese", "12/30/2018", "2,775.00", 1, 2019]
];

function esc(text) {
	return text.replace(/&/g, "&amp;");
}

function icon(id, cls) {
	return '<svg class="' + cls + '"><use href="#' + id + '"/></svg>';
}

document.getElementById("xpTree").innerHTML = folders.map(function (name, i) {
	var last = i == folders.length - 1;
	var toggle = '<svg class="xp-toggle" viewBox="0 0 9 9"><path d="M.5 .5H8.500V8.500H.5Z" fill="#fff" stroke="#848284"/><path d="M2 4.500H7" stroke="#000"/></svg>';
	return '<li style="--level:' + i + '">' +
		(last ? '<span class="xp-toggle"></span>' : toggle) +
		icon(last ? "xp-open" : "xp-folder", "xp-folder") +
		'<span class="xp-label' + (last ? " selected" : "") + '">' + name + "</span></li>";
}).join("");

document.getElementById("libTree").innerHTML = library.map(function (row) {
	var level = row[0], toggle = row[1], html = "<li>";
	for (var i = 0; i < level; i++) {
		html += '<span class="guide"></span>';
	}
	if (toggle == "+" || toggle == "-") {
		html += '<button type="button" class="guide branch" aria-label="Toggle ' + esc(row[3]) + '">' +
			'<svg viewBox="0 0 7 7"><path d="M.5 .5H6.500V6.500H.5Z" fill="#f4f4f4" stroke="#c4c4c4"/><path d="M2 3.500H5' +
			(toggle == "+" ? "M3.500 2V5" : "") + '" stroke="#777"/></svg></button>';
	} else {
		html += '<span class="guide branch ' + toggle + '"></span>';
	}
	return html + icon(row[2], "lib-icon") + "<span>" + esc(row[3]) + "</span></li>";
}).join("");

document.getElementById("gridBody").innerHTML = invoices.map(function (row, i) {
	var out = row[0][0] == "r";
	return '<tr class="' + (i == 1 ? "selected" : "") + '">' +
		"<td>" + icon("star", "star") + "</td>" +
		"<td>" + icon("st-" + row[0][0], "state") + "</td>" +
		"<td>" + icon("ft-" + row[0][1], "type") + "</td>" +
		"<td>INV # " + row[1] + " " + esc(row[2]) + "</td>" +
		"<td>" + row[1] + "</td>" +
		"<td>" + esc(row[3]) + "</td>" +
		"<td>" + row[4] + "</td>" +
		'<td class="total">$ ' + row[5] + "</td>" +
		'<td class="linked">' + (row[1] == "10401" ? '<a href="#">4</a>' : "0") + "</td>" +
		'<td class="ver"><a href="#">' + row[6] + "</a></td>" +
		'<td class="status' + (out ? " out" : "") + '">' + (out ? "Checked Out" : "Checked In") + "</td>" +
		"<td>" + row[7] + "</td></tr>";
}).join("");
```
